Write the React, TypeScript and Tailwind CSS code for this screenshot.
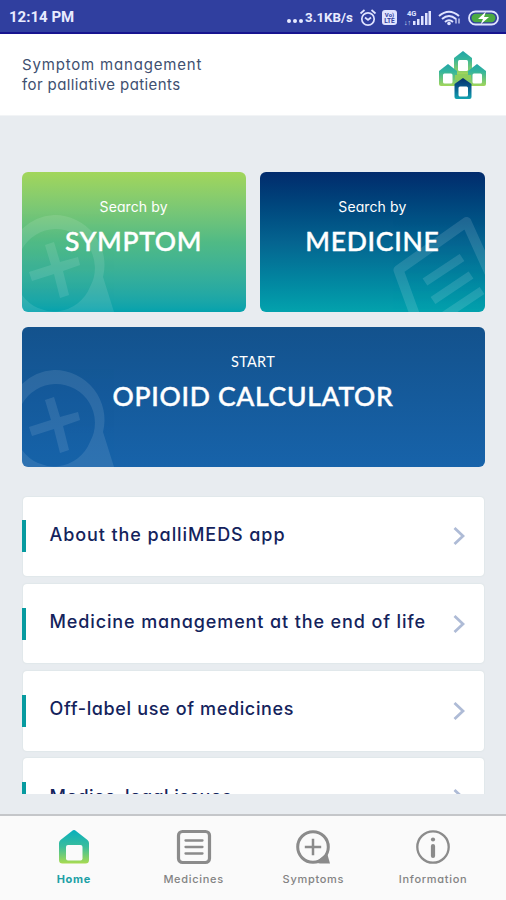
import type { ReactNode } from 'react';

const soft = "font-['Inter','Lato',sans-serif] [font-feature-settings:'cv11']";

function Logo() {
  return (
    <svg className="h-[50px] w-[50px]" viewBox="0 0 50 50">
      <defs>
        <linearGradient id="leaf" x1="0" y1="0" x2="0" y2="1">
          <stop offset="0" stopColor="#22a5a8" />
          <stop offset="0.35" stopColor="#35b59c" />
          <stop offset="1" stopColor="#a2d65a" />
        </linearGradient>
        <linearGradient id="deep" x1="0" y1="0" x2="0" y2="1">
          <stop offset="0" stopColor="#04316e" />
          <stop offset="0.4" stopColor="#08558a" />
          <stop offset="1" stopColor="#12a3b0" />
        </linearGradient>
      </defs>
      <path d="M17 20h15v16H17z" fill="#8fce5c" />
      <path d="M25 1l9 7v14q0 2-2 2H18q-2 0-2-2V8z" fill="url(#leaf)" />
      <path d="M10 14l9 7v13q0 2-2 2H3q-2 0-2-2V21z" fill="url(#leaf)" />
      <path d="M39 14l9 7v13q0 2-2 2H32q-2 0-2-2V21z" fill="url(#leaf)" />
      <path d="M17 25h16v5H17z" fill="#8fce5c" />
      <path d="M25 28l8.500 6v13q0 2-2 2H18.500q-2 0-2-2V34z" fill="url(#deep)" />
      <rect x="20" y="10" width="10" height="11" rx="1.500" fill="#fff" />
      <rect x="5" y="23.500" width="9.500" height="10" rx="1.500" fill="#fff" />
      <rect x="34.500" y="23.500" width="9.500" height="10" rx="1.500" fill="#fff" />
      <rect x="20.500" y="36.500" width="9.500" height="10" rx="1.500" fill="#fff" />
    </svg>
  );
}

function StatusIcons() {
  return (
    <svg className="h-5 w-[146px]" viewBox="0 0 146 20" fill="none">
      <g stroke="#dfe3ff" strokeWidth="1.700">
        <circle cx="9" cy="11" r="6.200" />
        <path d="M1.500 5.500l4-3.500M16.500 5.500l-4-3.500M6 9.500l3 2.500 3-2.500" />
      </g>
      <rect x="23" y="2" width="15" height="15" rx="3" fill="#dfe3ff" />
      <text x="30.500" y="8.500" textAnchor="middle" className="font-['Roboto',sans-serif]" fontSize="6" fontWeight="700" fill="#303f9f">Vo)</text>
      <text x="30.500" y="15" textAnchor="middle" className="font-['Roboto',sans-serif]" fontSize="6.500" fontWeight="700" fill="#303f9f">LTE</text>
      <text x="48" y="7.500" className="font-['Roboto',sans-serif]" fontSize="7.500" fontWeight="700" fill="#dfe3ff">4G</text>
      <text x="45" y="16.500" className="font-['Roboto',sans-serif]" fontSize="7" fontWeight="700" fill="#dfe3ff">↓↑</text>
      <g fill="#dfe3ff">
        <rect x="54" y="13" width="2.500" height="4" />
        <rect x="58" y="11" width="2.500" height="6" />
        <rect x="62" y="8" width="2.500" height="9" />
        <rect x="66" y="5" width="2.500" height="12" />
        <rect x="69.500" y="3" width="2.500" height="14" />
      </g>
      <g stroke="#dfe3ff" strokeWidth="2">
        <path d="M80 8q10-8.500 20 0M83 11q7-6 14 0M86 14q4-3.500 8 0" />
        <path d="M97 15.500v-5M100 10.500v5" strokeWidth="1.200" />
      </g>
      <circle cx="90" cy="15.500" r="1.800" fill="#dfe3ff" />
      <rect x="110" y="3.500" width="29" height="13" rx="6.500" stroke="#dfe3ff" strokeWidth="1.800" />
      <rect x="112.500" y="5.800" width="24" height="8.500" rx="4.200" fill="#4bab42" />
      <path d="M127 3.500l-8 7.500h5L121.500 16.500l8.500-7.500h-5z" fill="#fff" />
    </svg>
  );
}

function PlusArt() {
  return (
    <svg className="absolute bottom-0 left-0 h-[97px] w-[95px]" viewBox="0 0 95 97" fill="#fff" opacity="0.1">
      <path
        fillRule="evenodd"
        d="M32 0A50 50 0 0 1 81 62l11 35H56A50 50 0 0 1 10 97H0V14A50 50 0 0 1 32 0zM33 14A39 39 0 0 0 0 34V80A39 39 0 0 0 68 72A39 39 0 0 0 33 14z"
      />
      <path d="M23 30l9-3 6 20 18-5 2 8-17 6 6 24-9 3-6-24-22 7-3-9 22-7z" />
    </svg>
  );
}

function PageArt() {
  return (
    <svg className="absolute bottom-0 right-0 h-[97px] w-[100px]" viewBox="0 0 100 97" fill="none" stroke="#fff" opacity="0.12">
      <path d="M31 103L13.500 55L81.500 7L105 59" strokeWidth="10" strokeLinejoin="round" />
      <path d="M40 67L77 42.500M48 85.500L86 60M58 101.500L97 75.500" strokeWidth="8.500" />
    </svg>
  );
}

function Tile({ top, topClass, title, className, art }: { top: string; topClass: string; title: string; className: string; art: ReactNode }) {
  return (
    <button className={`relative flex h-[140px] flex-col items-center overflow-hidden rounded-md pt-[25px] text-white ${className}`}>
      {art}
      <span className={`relative whitespace-nowrap leading-5 ${topClass}`}>{top}</span>
      <span className="relative mt-2 whitespace-nowrap font-['Lato',sans-serif] text-[26.5px] font-medium leading-8 tracking-[0.7px] [-webkit-text-stroke:0.45px_white]">{title}</span>
    </button>
  );
}

const rows = [
  { label: 'About the palliMEDS app', tracking: 'tracking-[0.92px]' },
  { label: 'Medicine management at the end of life', tracking: 'tracking-[0.88px]' },
  { label: 'Off-label use of medicines', tracking: 'tracking-[0.64px]' },
  { label: 'Medico-legal issues', tracking: 'tracking-[0.45px]' },
];

function Row({ label, tracking }: { label: string; tracking: string }) {
  return (
    <div className="flex h-[79.5px] shrink-0 items-center">
      <div className="z-10 -mr-1 h-8 w-1 bg-[#079ba0]" />
      <div className="ml-px mr-px flex h-full flex-1 items-center justify-between rounded bg-white pl-[27px] pr-[18.5px] shadow-[0_0_2px_#cfdcdc]">
        <span className={`whitespace-nowrap pb-[3px] text-[18px] font-medium leading-6 text-[#14235c] ${soft} ${tracking}`}>{label}</span>
        <svg className="h-5 w-3" viewBox="0 0 12 20" fill="none" stroke="#aebbd6" strokeWidth="2.800">
          <path d="M1.500 2l8.500 8-8.500 8" />
        </svg>
      </div>
    </div>
  );
}

function HomeIcon() {
  return (
    <svg className="h-9 w-9" viewBox="0 0 36 36">
      <defs>
        <linearGradient id="home" x1="0" y1="0" x2="0" y2="1">
          <stop offset="0" stopColor="#08afbd" />
          <stop offset="0.5" stopColor="#3abd9c" />
          <stop offset="1" stopColor="#a8db50" />
        </linearGradient>
      </defs>
      <path d="M18 1q1 0 2 1l11.500 9q1.500 1.500 1.500 3v17q0 3.500-3.500 3.500h-23Q3 34.500 3 31V14q0-1.500 1.500-3L16 2q1-1 2-1z" fill="url(#home)" />
      <rect x="10" y="16" width="16.500" height="15.500" rx="2" fill="#fafafa" />
    </svg>
  );
}

function ListIcon() {
  return (
    <svg className="h-9 w-9" viewBox="0 0 36 36" fill="none" stroke="#8b8b8b">
      <rect x="2.500" y="2.500" width="31" height="31" rx="4" strokeWidth="3.200" />
      <path d="M9.500 11.500h17M9.500 18h17M9.500 24.500h17" strokeWidth="2.300" strokeLinecap="round" />
    </svg>
  );
}

function BubbleIcon() {
  return (
    <svg className="h-9 w-9" viewBox="0 0 36 36" fill="none" stroke="#8b8b8b">
      <circle cx="18" cy="18" r="15.300" strokeWidth="3" />
      <path d="M9.800 18h16.400M18 9.800v16.400" strokeWidth="2.500" />
      <path d="M32 24l3 10.500H25l-5-1z" fill="#8b8b8b" stroke="none" />
    </svg>
  );
}

function InfoIcon() {
  return (
    <svg className="h-9 w-9" viewBox="0 0 36 36" fill="none" stroke="#8b8b8b">
      <circle cx="18" cy="18" r="15.700" strokeWidth="2.300" />
      <path d="M18 17v10" strokeWidth="4.200" strokeLinecap="round" />
      <circle cx="18" cy="10.500" r="2.100" fill="#8b8b8b" stroke="none" />
    </svg>
  );
}

const tabs = [
  { label: 'Home', icon: <HomeIcon />, style: 'font-bold text-[#20a0a5]' },
  { label: 'Medicines', icon: <ListIcon />, style: 'font-medium text-[#838383]' },
  { label: 'Symptoms', icon: <BubbleIcon />, style: 'font-medium text-[#838383]' },
  { label: 'Information', icon: <InfoIcon />, style: 'font-medium text-[#838383]' },
];

export default function App() {
  return (
    <div className="flex h-[900px] w-[506px] flex-col overflow-hidden bg-[#e8ecf0]">
      <div className="flex h-[34px] shrink-0 items-center border-b-2 border-[#17148f] bg-[#303f9f] pl-[9px] pt-[3px] font-['Roboto',sans-serif] font-bold text-[#e8ebff]">
        <span className="w-[278px] text-[15px]">12:14 PM</span>
        <span className="flex w-[72px] items-center whitespace-nowrap text-[13.3px]">
          <span className="mr-0.5 mt-1.5 flex gap-[2px]">
            <i className="h-1 w-1 rounded-full bg-[#e8ebff]" />
            <i className="h-1 w-1 rounded-full bg-[#e8ebff]" />
            <i className="h-1 w-1 rounded-full bg-[#e8ebff]" />
          </span>
          3.1KB/s
        </span>
        <StatusIcons />
      </div>

      <header className="flex h-[82px] shrink-0 items-center justify-between border-b border-[#f2f4f6] bg-white pl-[22px] pr-[18px]">
        <p className={`whitespace-nowrap pt-px text-[15px] leading-5 text-[#405070] ${soft}`}>
          <span className="tracking-[0.82px]">Symptom management</span>
          <br />
          <span className="tracking-[0.4px]">for palliative patients</span>
        </p>
        <Logo />
      </header>

      <main className="flex min-h-0 flex-1 flex-col px-[21.5px] pb-5 pt-14">
        <div className="grid grid-cols-2 gap-[14.5px]">
          <Tile top="Search by" topClass={`text-[14px] tracking-[0.1px] ${soft}`} title="SYMPTOM" className="bg-linear-to-b from-[#a2d65a] via-[#50ba85] to-[#03a2ad]" art={<PlusArt />} />
          <Tile top="Search by" topClass={`text-[14px] tracking-[0.1px] ${soft}`} title="MEDICINE" className="bg-linear-to-b from-[#022b6c] via-[#056490] to-[#03a2ad]" art={<PageArt />} />
          <Tile top="START" topClass="font-['Lato',sans-serif] text-[14.5px] tracking-[0.3px]" title="OPIOID CALCULATOR" className="col-span-2 bg-linear-to-b from-[#13528d] to-[#1763aa]" art={<PlusArt />} />
        </div>
        <div className="mt-[29px] flex min-h-0 flex-1 flex-col gap-[7.8px] overflow-hidden pt-px">
          {rows.map((row) => (
            <Row key={row.label} {...row} />
          ))}
        </div>
      </main>

      <nav className="flex h-[86px] shrink-0 border-t-2 border-[#c4c6c9] bg-[#fafafa] pl-[14px] pr-[13px] pt-[13px]">
        {tabs.map((tab) => (
          <div key={tab.label} className="flex flex-1 flex-col items-center">
            {tab.icon}
            <span className={`mt-1 text-[11px] leading-5 tracking-[0.7px] ${soft} ${tab.style}`}>{tab.label}</span>
          </div>
        ))}
      </nav>
    </div>
  );
}
